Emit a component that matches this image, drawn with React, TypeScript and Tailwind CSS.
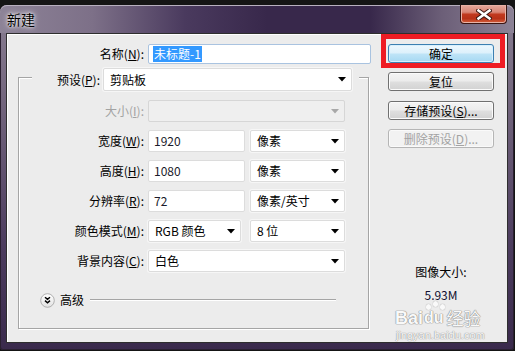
import React from "react";

const U = ({ c }: { c: string }) => <span className="underline underline-offset-[1px]">{c}</span>;

function Label({ w, children, disabled }: { w: string; children: React.ReactNode; disabled?: boolean }) {
  return (
    <div className={`${w} shrink-0 text-right text-[12px] leading-[16px] ${disabled ? "text-[#a3a3a3]" : "text-black"}`}>
      {children}
    </div>
  );
}

function Arrow({ disabled }: { disabled?: boolean }) {
  return (
    <svg width="8" height="5" viewBox="0 0 8 5" className="mr-[5px] shrink-0">
      <path d="M0 0 H8 L4 4.5 Z" fill={disabled ? "#a8a8a8" : "#000"} />
    </svg>
  );
}

function Select({ w, text, disabled, h = "h-[22px]" }: { w: string; text?: string; disabled?: boolean; h?: string }) {
  return (
    <div
      className={`${w} ${h} shrink-0 flex items-center justify-between rounded-[2px] border ${
        disabled ? "border-[#d6d6d6] bg-[#efefef]" : "border-[#dcdcdc] bg-white shadow-[0_0_0_1px_#f6f6f6]"
      } text-[12px] leading-[16px] text-black`}
    >
      <span className="pl-[6px] whitespace-nowrap">{text}</span>
      <Arrow disabled={disabled} />
    </div>
  );
}

function Input({ w, text }: { w: string; text: string }) {
  return (
    <div className={`${w} h-[22px] shrink-0 flex items-center rounded-[2px] border border-[#dcdcdc] bg-white text-[12px] leading-[16px] text-[#1a1a2a]`}>
      <span className="pl-[5px]">{text}</span>
    </div>
  );
}

function Btn({ children, kind = "normal", mt }: { children: React.ReactNode; kind?: "normal" | "ok" | "disabled"; mt: string }) {
  const cls =
    kind === "ok"
      ? "border-[#3c7fb1] bg-[linear-gradient(180deg,#eef8fe_0%,#dcf0fb_48%,#bfe4f7_52%,#a6d8f3_100%)] text-black shadow-[inset_0_0_0_1px_#d8f0fd]"
      : kind === "disabled"
      ? "border-[#b5b5b5] bg-[#f2f2f2] text-[#a3a3a3] shadow-[inset_0_0_0_1px_#fafafa]"
      : "border-[#707070] bg-[linear-gradient(180deg,#f4f4f4_0%,#ececec_48%,#dfdfdf_52%,#d2d2d2_100%)] text-black shadow-[inset_0_0_0_1px_#fbfbfb]";
  return (
    <div className={`${mt} ml-[7px] w-[106px] h-[19px] flex items-center justify-center rounded-[3px] border text-[12px] leading-[16px] ${cls}`}>
      {children}
    </div>
  );
}

export default function App() {
  return (
    <div className="w-[515px] h-[351px] bg-[#151515] pt-[5px] overflow-hidden font-['Noto_Sans_CJK_SC','Noto_Sans',sans-serif]">
      <div className="w-[514px] h-[345px] rounded-t-[7px] rounded-b-[3px] flex flex-col bg-[linear-gradient(180deg,#8a7f93_0%,#75687f_25%,#4c3c5e_70%,#3a2a4c_100%)] shadow-[inset_0_0_0_1px_#2a2030]">
        {/* title bar */}
        <div className="h-[28px] flex justify-between rounded-t-[7px] bg-[linear-gradient(90deg,#8d8397_0%,#7d7088_18%,#4a3a5e_36%,#38284b_52%,#38284b_72%,#6c5f78_86%,#8c8296_100%)] shadow-[inset_0_1px_0_#b8b0bf]">
          <div className="pl-[7px] pt-[5px] text-[14px] leading-[18px] text-black [text-shadow:0_0_6px_#ffffff,0_0_3px_#ffffff]">
            新建
          </div>
          <div className="mr-[7px] w-[47px] h-[19px] flex items-center justify-center rounded-b-[4px] border border-t-0 border-[#3b1410] bg-[linear-gradient(180deg,#e6a89c_0%,#d98676_40%,#c1391f_52%,#b83219_75%,#d5603c_100%)] shadow-[inset_0_0_0_1px_#e9b2a6]">
            <svg width="16" height="11" viewBox="0 0 16 11">
              <path d="M2.5 1.5 L13.5 9.5 M13.5 1.5 L2.5 9.5" stroke="#3a1510" strokeWidth="4.5" strokeLinecap="square" />
              <path d="M2.5 1.5 L13.5 9.5 M13.5 1.5 L2.5 9.5" stroke="#ffffff" strokeWidth="2.6" strokeLinecap="square" />
            </svg>
          </div>
        </div>

        {/* content */}
        <div className="ml-[6px] w-[502px] h-[310px] border border-[#2e2e2e] bg-[#ececec] shadow-[inset_1px_1px_0_#ffffff] flex">
          {/* left column */}
          <div className="w-[374px] flex flex-col">
            <div className="mt-[10px] flex items-center h-[20px]">
              <Label w="w-[137px]">
                名称(<U c="N" />):
              </Label>
              <div className="ml-[4px] w-[223px] h-[20px] flex items-center rounded-[2px] border border-[#a9c3e0] bg-white text-[12px] leading-[16px]">
                <span className="ml-[4px] px-[1px] bg-[#3399ff] text-white">未标题-1</span>
              </div>
            </div>

            <div className="mt-[13px] ml-[11px] w-[351px] h-[252px] border border-[#a5a5a5] shadow-[1px_1px_0_#ffffff,inset_1px_1px_0_#ffffff] flex flex-col">
              <div className="-mt-[10px] flex">
                <div className="ml-[13px] flex items-center bg-[#ececec] pr-[7px]">
                  <Label w="w-[71px] pr-[3px]">
                    预设(<U c="P" />):
                  </Label>
                  <Select w="w-[249px]" h="h-[23px]" text="剪贴板" />
                </div>
              </div>

              <div className="mt-[9px] flex items-center">
                <Label w="w-[125px]" disabled>
                  大小(<U c="I" />):
                </Label>
                <div className="ml-[4px]">
                  <Select w="w-[197px]" disabled />
                </div>
              </div>

              <div className="mt-[8px] flex items-center">
                <Label w="w-[125px]">
                  宽度(<U c="W" />):
                </Label>
                <div className="ml-[4px] flex gap-[5px]">
                  <Input w="w-[97px]" text="1920" />
                  <Select w="w-[95px]" text="像素" />
                </div>
              </div>

              <div className="mt-[8px] flex items-center">
                <Label w="w-[125px]">
                  高度(<U c="H" />):
                </Label>
                <div className="ml-[4px] flex gap-[5px]">
                  <Input w="w-[97px]" text="1080" />
                  <Select w="w-[95px]" text="像素" />
                </div>
              </div>

              <div className="mt-[8px] flex items-center">
                <Label w="w-[125px]">
                  分辨率(<U c="R" />):
                </Label>
                <div className="ml-[4px] flex gap-[5px]">
                  <Input w="w-[97px]" text="72" />
                  <Select w="w-[95px]" text="像素/英寸" />
                </div>
              </div>

              <div className="mt-[8px] flex items-center">
                <Label w="w-[125px]">
                  颜色模式(<U c="M" />):
                </Label>
                <div className="ml-[4px] flex gap-[9px]">
                  <Select w="w-[93px]" text="RGB 颜色" />
                  <Select w="w-[95px]" text="8 位" />
                </div>
              </div>

              <div className="mt-[8px] flex items-center">
                <Label w="w-[125px]">
                  背景内容(<U c="C" />):
                </Label>
                <div className="ml-[4px]">
                  <Select w="w-[197px]" text="白色" />
                </div>
              </div>

              <div className="mt-[21px] flex items-center h-[14px]">
                <svg width="15" height="15" viewBox="0 0 15 15" className="ml-[21px] shrink-0">
                  <defs>
                    <linearGradient id="cg" x1="0" y1="0" x2="0" y2="1">
                      <stop offset="0" stopColor="#ffffff" />
                      <stop offset="1" stopColor="#e2e2e2" />
                    </linearGradient>
                  </defs>
                  <circle cx="7.5" cy="7.5" r="6.8" fill="url(#cg)" stroke="#a8a8a8" strokeWidth="0.9" />
                  <path d="M5 4.2 L7.5 6.4 L10 4.2 M5 7.6 L7.5 9.8 L10 7.6" stroke="#000" strokeWidth="1.4" fill="none" />
                </svg>
                <span className="ml-[5px] text-[12px] leading-[16px] text-black">高级</span>
                <div className="ml-[6px] w-[246px] h-[2px] border-t border-[#a5a5a5] bg-white" />
              </div>
            </div>
          </div>

          {/* right column */}
          <div className="flex-1 flex flex-col">
            <div className="relative">
              <Btn kind="ok" mt="mt-[10px]">确定</Btn>
              <div className="absolute left-0 top-0 w-[124px] h-[34px] border-[5px] border-[#ee1c24]" />
            </div>
            <Btn mt="mt-[9px]">复位</Btn>
            <Btn mt="mt-[10px]">
              存储预设(<U c="S" />)...
            </Btn>
            <Btn kind="disabled" mt="mt-[9px]">
              删除预设(<U c="D" />)...
            </Btn>

            <div className="mt-[116px] ml-[7px] w-[106px] text-center text-[12px] leading-[16px] text-black">图像大小:</div>
            <div className="mt-[7px] ml-[7px] w-[106px] text-center text-[12px] leading-[16px] text-[#101030]">5.93M</div>

            <div className="mt-[6px] ml-[14px] flex items-end text-[#f9f9f9] [text-shadow:0_0_1px_#8a8a8a,0_0_1px_#8a8a8a,0_0_1px_#8a8a8a] font-['Liberation_Sans','Noto_Sans_CJK_SC',sans-serif]">
              <span className="text-[18px] leading-[18px] font-bold">Bai</span>
              <span className="relative text-[16px] leading-[18px] font-bold ml-[1px]">
                du
                <span className="absolute left-[2px] -top-[5px] w-[5px] h-[6px] rounded-full bg-[#f9f9f9] shadow-[0_0_1px_#8a8a8a]" />
                <span className="absolute left-[9px] -top-[8px] w-[5px] h-[6px] rounded-full bg-[#f9f9f9] shadow-[0_0_1px_#8a8a8a]" />
                <span className="absolute left-[16px] -top-[5px] w-[5px] h-[6px] rounded-full bg-[#f9f9f9] shadow-[0_0_1px_#8a8a8a]" />
              </span>
              <span className="ml-[3px] text-[17px] leading-[18px] font-['Noto_Sans_CJK_SC',sans-serif]">经验</span>
            </div>
            <div className="mt-[2px] ml-[15px] text-[11px] leading-[12px] text-[#f9f9f9] [text-shadow:0_0_1px_#909090,0_0_1px_#909090] font-['Liberation_Sans',sans-serif]">
              jingyan.baidu.com
            </div>
          </div>
        </div>
      </div>
    </div>
  );
}
